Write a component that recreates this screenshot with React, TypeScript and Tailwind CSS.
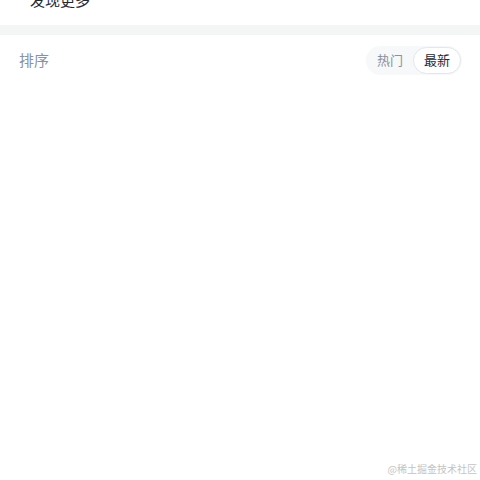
import React, { useState } from 'react';

const font = { fontFamily: '"Noto Sans CJK SC", "Noto Sans", sans-serif' };

export default function App() {
  const [sort, setSort] = useState<'hot' | 'new'>('new');

  return (
    <div className="relative h-[480px] w-[480px] overflow-hidden bg-white" style={font}>
      {/* header strip, scrolled mostly out of view */}
      <div className="flow-root h-[25px] bg-white">
        <div className="-mt-[12px] pl-[30px] text-[15px] leading-[24px] text-[#252933]">发现更多</div>
      </div>
      <div className="h-[10px] bg-[#f4f5f5]" />

      {/* sort bar */}
      <div className="flex items-center justify-between pl-[19px] pr-[18px] pt-[10px]">
        <span className="text-[15px] leading-[30px] text-[#8a919f]">排序</span>
        <div className="flex h-[29px] items-center rounded-full bg-[#f7f8fa] p-[1px]">
          <button
            onClick={() => setSort('hot')}
            className={`h-full rounded-full px-[10px] text-[13px] ${
              sort === 'hot' ? 'border border-[#e4e6eb] bg-white text-[#252933]' : 'text-[#8a919f]'
            }`}
          >
            热门
          </button>
          <button
            onClick={() => setSort('new')}
            className={`h-full rounded-full px-[10px] text-[13px] ${
              sort === 'new' ? 'border border-[#e4e6eb] bg-white text-[#252933]' : 'text-[#8a919f]'
            }`}
          >
            最新
          </button>
        </div>
      </div>

      <div className="absolute bottom-[4px] right-[3px] text-[10px] leading-[14px] text-[#c4c4c4]">
        @稀土掘金技术社区
      </div>
    </div>
  );
}
